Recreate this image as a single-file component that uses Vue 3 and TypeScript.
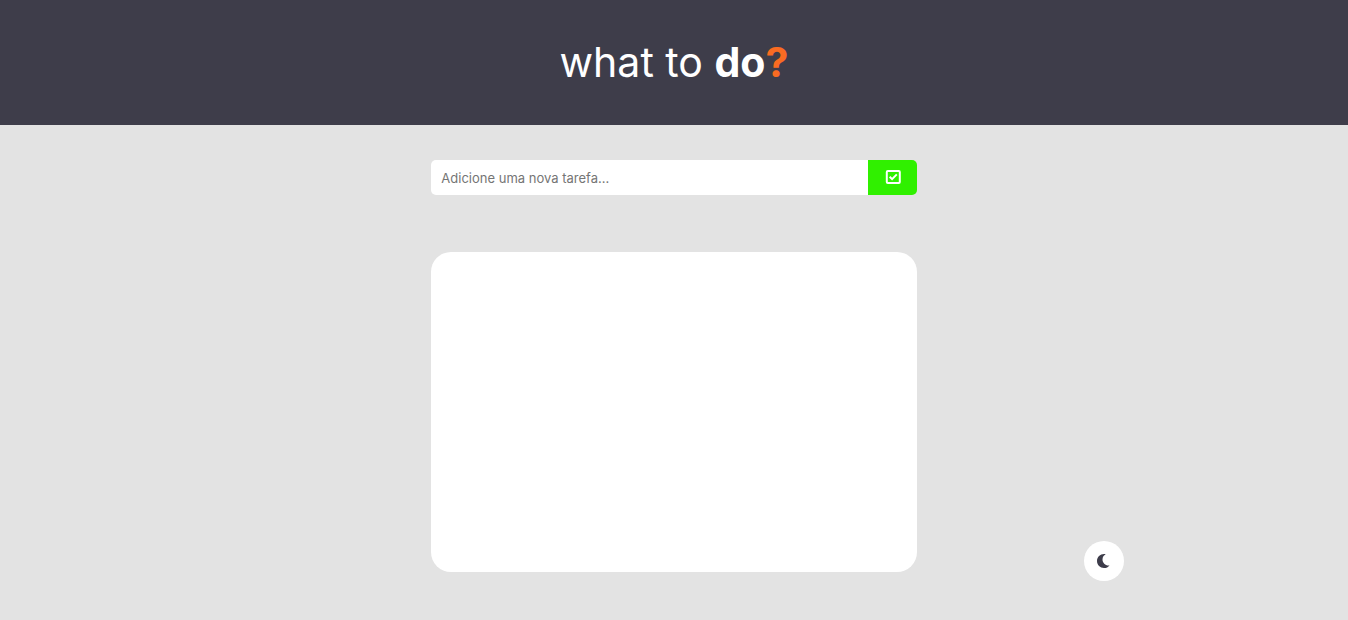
<script setup lang="ts">
import { ref } from 'vue'

const draft = ref('')
const tasks = ref<string[]>([])
const dark = ref(false)

function addTask(): void {
  const text = draft.value.trim()
  if (!text) return
  tasks.value.push(text)
  draft.value = ''
}
</script>

<template>
  <div class="page" :class="{ dark }">
    <header class="header">
      <h1 class="title">what to <strong>do<span class="mark">?</span></strong></h1>
    </header>
    <main class="content">
      <form class="task-form" @submit.prevent="addTask">
        <input v-model="draft" class="task-input" type="text" aria-label="Nova tarefa" placeholder="Adicione uma nova tarefa..." />
        <button class="add" type="submit" aria-label="Adicionar tarefa">
          <svg viewBox="0 0 17 14" width="17" height="14" fill="none" stroke="currentColor" stroke-width="2">
            <rect x="2.8" y="1" width="13" height="12" rx="1" />
            <path d="M5.7 6.7l2.4 2.4 4.7-4.7" />
          </svg>
        </button>
      </form>
      <ul class="list">
        <li v-for="(task, i) in tasks" :key="i">{{ task }}</li>
      </ul>
    </main>
    <button class="theme" type="button" aria-label="Alternar tema" @click="dark = !dark">
      <svg viewBox="0 0 14 14" width="14" height="14" fill="currentColor">
        <path d="M7 0C7.6 0 8.2 0.1 8.7 0.2C6.8 1.2 5.5 3.1 5.5 5.4C5.5 9 8.8 12 12.5 11.4C11.2 13 9.4 14 7 14C3.2 14 0 10.8 0 7C0 3.2 3.2 0 7 0Z" />
      </svg>
    </button>
  </div>
</template>

<style>
body {
  margin: 0;
}
</style>

<style scoped>
.page {
  min-height: 100vh;
  background: #e3e3e3;
  font-family: Inter, sans-serif;
  color: #3d3c4a;
}
.header {
  display: flex;
  justify-content: center;
  padding: 38px 16px;
  background: #3e3d4a;
}
.title {
  margin: 0;
  color: #fff;
  font-size: 41px;
  line-height: 49px;
  font-weight: 400;
}
.title strong {
  font-weight: 700;
}
.mark {
  color: #f96b22;
}
.content {
  box-sizing: border-box;
  width: 36%;
  min-width: 320px;
  margin: 0 auto;
  padding: 35px 0 48px;
}
.task-form {
  display: flex;
  height: 35px;
  border-radius: 5px;
  overflow: hidden;
}
.task-input {
  flex: 1;
  min-width: 0;
  padding: 0 10px;
  border: 0;
  outline: 0;
  background: #fff;
  font-family: inherit;
  font-size: 13px;
}
.task-input::placeholder {
  color: #757575;
}
.add {
  display: flex;
  align-items: center;
  justify-content: center;
  width: 49px;
  padding: 0 0 1px;
  border: 0;
  background: #30f000;
  color: #fff;
  cursor: pointer;
}
.list {
  box-sizing: border-box;
  min-height: 320px;
  margin: 57px 0 0;
  padding: 20px;
  border-radius: 20px;
  background: #fff;
  list-style: none;
}
.theme {
  position: fixed;
  right: 224px;
  bottom: 39px;
  display: flex;
  align-items: center;
  justify-content: center;
  width: 40px;
  height: 40px;
  padding: 0;
  border: 0;
  border-radius: 50%;
  background: #fff;
  color: #3d3c4a;
  cursor: pointer;
}
.dark {
  background: #22212b;
}
</style>
